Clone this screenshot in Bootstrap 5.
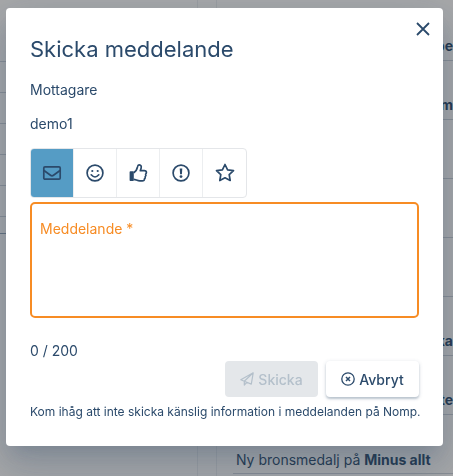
<!DOCTYPE html>
<html lang="sv">
<head>
<meta charset="utf-8">
<meta name="viewport" content="width=device-width, initial-scale=1">
<title>Skicka meddelande</title>
<link href="https://cdn.jsdelivr.net/npm/bootstrap@5.3.0/dist/css/bootstrap.min.css" rel="stylesheet">
<style>
:root { --ink: #2b4a6b; --accent: #f78c24; --rule: #8a8f95; }
body { font-family: Inter, "Liberation Sans", sans-serif; font-size: 14px; line-height: 20px; color: var(--ink); background: #a8a9aa; }
.feed-page { height: 100vh; color: #25394f; }
.side-panel { flex: 0 0 198px; border-right: 1px solid #9c9fa2; }
.side-line { height: 31px; border-bottom: 1px solid var(--rule); }
.side-first { height: 62px; }
.side-last { height: 17px; border-bottom: 1px solid #66727e; }
.feed-panel { margin-left: 18px; padding-left: 16px; border-left: 1px solid #9c9fa2; }
.feed-item { flex: 0 0 59px; padding: 0 3px 3px; border-bottom: 1px solid var(--rule); }
.feed-first { flex-basis: 61px; }
.feed-item strong { font-weight: 700; }
.message-dialog { max-width: none; margin: 8px 10px 0 6px; }
.message-panel { color: var(--ink); border: 0; border-radius: 4px; padding: 24px; box-shadow: 0 11px 15px -7px rgba(48,76,108,.2), 0 24px 38px 3px rgba(48,76,108,.16), 0 9px 46px 8px rgba(48,76,108,.12); }
.dialog-title { font-size: 22px; line-height: 34px; font-weight: 400; margin-bottom: 14px; }
.close-x { position: absolute; top: 9px; right: 8px; width: 24px; height: 24px; color: var(--ink); }
.recipient { margin-bottom: 14px; }
.kinds { border: 1px solid #e4e6e9; border-radius: 4px; margin-bottom: 4px; overflow: hidden; }
.kinds .btn { width: 43px; height: 48px; color: var(--ink); border: 0; border-right: 1px solid #eceef0; border-radius: 0; }
.kinds .btn:last-child { border-right: 0; }
.kinds .btn-check:checked + .btn { background: #559cc5; border-color: #eceef0; background-clip: padding-box; }
.message-field { border: 2px solid var(--accent); border-radius: 5px; padding: 15px 8px 4px; margin-bottom: 23px; }
.message-field label { color: var(--accent); }
.message-field textarea { height: 73px; resize: none; color: var(--ink); }
.action { width: 93px; height: 36px; border: 0; border-radius: 4px; font-size: 14px; font-weight: 500; color: var(--ink); }
.action:disabled { background: #e4e7ea; color: #b4c0cb; opacity: 1; }
.action-cancel, .action-cancel:hover { background: #fff; box-shadow: 0 2px 2px rgba(43,74,107,.22), 0 1px 4px rgba(43,74,107,.18); }
.notice { font-size: 12px; line-height: 16px; margin-top: 7px; margin-bottom: 2px; }
</style>
<script src="https://cdn.jsdelivr.net/npm/bootstrap@5.3.0/dist/js/bootstrap.bundle.min.js"></script>
</head>
<body>
<main class="feed-page d-flex overflow-hidden">
  <div class="side-panel">
    <div class="side-line side-first"></div>
    <div class="side-line"></div><div class="side-line"></div><div class="side-line"></div><div class="side-line"></div><div class="side-line"></div>
    <div class="side-last"></div>
  </div>
  <div class="feed-panel d-flex flex-column flex-grow-1">
    <div class="feed-item feed-first d-flex align-items-end justify-content-end p-0 pb-1"><strong>be</strong></div>
    <div class="feed-item d-flex align-items-end justify-content-end p-0 pb-1"><strong>m</strong></div>
    <div class="feed-item"></div>
    <div class="feed-item"></div>
    <div class="feed-item"></div>
    <div class="feed-item d-flex align-items-end justify-content-end p-0 pb-1"><strong>ka</strong></div>
    <div class="feed-item d-flex align-items-end justify-content-end p-0 pb-1"><strong>te</strong></div>
    <div class="feed-item d-flex align-items-end"><span>Ny bronsmedalj på <strong>Minus allt</strong></span></div>
  </div>
</main>

<div class="modal show d-block" role="dialog" aria-modal="true" aria-labelledby="dialogTitle">
  <div class="modal-dialog message-dialog">
    <form class="modal-content message-panel">
      <button type="button" class="btn p-0 border-0 close-x d-flex align-items-center justify-content-center" aria-label="Stäng">
        <svg width="14" height="14" viewBox="0 0 14 14" fill="none" stroke="currentColor" stroke-width="1.8"><path d="M1 1l12 12M13 1L1 13"/></svg>
      </button>
      <h1 class="dialog-title" id="dialogTitle">Skicka meddelande</h1>
      <p class="recipient">Mottagare</p>
      <p class="recipient">demo1</p>
      <div class="kinds d-flex align-self-start" role="group" aria-label="Typ av meddelande">
        <input type="radio" class="btn-check" name="kind" id="kindMail" checked>
        <label class="btn p-0 d-flex align-items-center justify-content-center" for="kindMail" aria-label="Brev">
          <svg width="20" height="20" viewBox="0 0 20 20" fill="none" stroke="currentColor" stroke-width="1.7" stroke-linejoin="round"><rect x="1.8" y="3.8" width="16.4" height="12.4" rx="1.2"/><path d="M2 7.5l6.5 4.8q1.5 1.1 3 0L18 7.5"/></svg>
        </label>
        <input type="radio" class="btn-check" name="kind" id="kindSmile">
        <label class="btn p-0 d-flex align-items-center justify-content-center" for="kindSmile" aria-label="Glad">
          <svg width="20" height="20" viewBox="0 0 20 20" fill="none" stroke="currentColor" stroke-width="1.7" stroke-linecap="round"><circle cx="10" cy="10" r="7.9"/><path d="M6.2 11.8q3.8 4.4 7.6 0"/><circle cx="7.3" cy="8" r="1.1" fill="currentColor" stroke="none"/><circle cx="12.7" cy="8" r="1.1" fill="currentColor" stroke="none"/></svg>
        </label>
        <input type="radio" class="btn-check" name="kind" id="kindThumb">
        <label class="btn p-0 d-flex align-items-center justify-content-center" for="kindThumb" aria-label="Tummen upp">
          <svg width="20" height="20" viewBox="0 0 20 20" fill="none" stroke="currentColor" stroke-width="1.7" stroke-linejoin="round"><rect x="1.6" y="8.3" width="4.2" height="9.7" rx=".8" fill="currentColor" stroke="none"/><path d="M5.7 9.8C7.8 8.6 9 6.4 9.5 3.9 9.8 2.2 10.3 1.7 11.2 1.8c1.9.2 2.4 1.7 1.9 3.5-.2.8-.6 1.5-.8 2.3h4c1.4 0 2.1.9 2.1 1.9 0 .9-.5 1.4-.8 1.6.4.8.4 1.9-.4 2.6.3 1-.1 1.7-.7 2.1.1 1.3-.7 2-2.3 2h-2.3c-2.5 0-4-1.3-6.2-1.5"/></svg>
        </label>
        <input type="radio" class="btn-check" name="kind" id="kindAlert">
        <label class="btn p-0 d-flex align-items-center justify-content-center" for="kindAlert" aria-label="Viktigt">
          <svg width="20" height="20" viewBox="0 0 20 20" fill="none" stroke="currentColor" stroke-width="1.7"><circle cx="10" cy="10" r="7.9"/><path d="M8.7 5.4h2.6l-.4 5.9H9.1z" fill="currentColor" stroke="none"/><circle cx="10" cy="13.6" r="1.4" fill="currentColor" stroke="none"/></svg>
        </label>
        <input type="radio" class="btn-check" name="kind" id="kindStar">
        <label class="btn p-0 d-flex align-items-center justify-content-center" for="kindStar" aria-label="Stjärna">
          <svg width="20" height="20" viewBox="0 0 20 20" fill="none" stroke="currentColor" stroke-width="1.7" stroke-linejoin="round"><path d="M10 1.5l2.6 5.3 5.9.8-4.3 4.1 1 5.8-5.2-2.7-5.2 2.7 1-5.8-4.3-4.1 5.9-.8z"/></svg>
        </label>
      </div>
      <div class="message-field">
        <label class="d-block" for="message">Meddelande *</label>
        <textarea class="form-control border-0 p-0 shadow-none bg-transparent" id="message" maxlength="200" required></textarea>
      </div>
      <div>0 / 200</div>
      <div class="d-flex justify-content-end gap-2">
        <button type="submit" class="btn action p-0 d-flex align-items-center justify-content-center gap-1" disabled>
          <svg width="14" height="14" viewBox="0 0 14 14" fill="none" stroke="currentColor" stroke-width="1.2" stroke-linejoin="round"><path d="M13.2.8L.8 7.7l3.5 1.5 7 2.9zM13.2.8L4.3 9.2v3.9l2.5-2.8"/></svg>
          Skicka
        </button>
        <button type="button" class="btn action action-cancel p-0 d-flex align-items-center justify-content-center gap-1">
          <svg width="14" height="14" viewBox="0 0 14 14" fill="none" stroke="currentColor" stroke-width="1.3"><circle cx="7" cy="7" r="6.2"/><path d="M5 5l4 4M9 5L5 9" stroke-width="1.5"/></svg>
          Avbryt
        </button>
      </div>
      <p class="notice text-nowrap">Kom ihåg att inte skicka känslig information i meddelanden på Nomp.</p>
    </form>
  </div>
</div>
</body>
</html>
